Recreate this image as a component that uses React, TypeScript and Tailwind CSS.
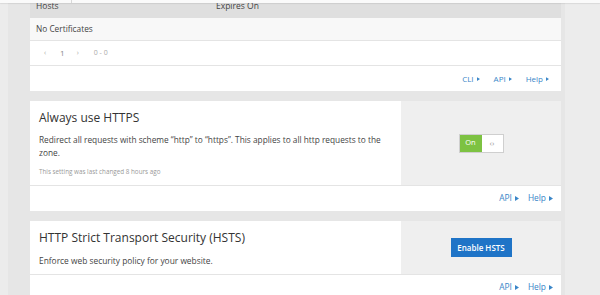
import React from "react";

const Tri = ({ size = 4 }: { size?: number }) => (
  <svg width={size} height={size + 1} viewBox="0 0 4 5" className="inline-block ml-[3px]">
    <path d="M0 0 L4 2.5 L0 5 Z" fill="currentColor" />
  </svg>
);

const Link = ({ label, size = 4 }: { label: string; size?: number }) => (
  <span className="flex items-center text-[#3a86c8]">
    {label}
    <Tri size={size} />
  </span>
);

export default function App() {
  return (
    <div
      className="relative w-[600px] h-[295px] overflow-hidden bg-[#ebebeb] flex"
      style={{ fontFamily: '"Open Sans", "Noto Sans", sans-serif' }}
    >
      <div className="absolute left-0 top-0 w-[600px] h-[3px] bg-[#fafafa] shadow-[0_1px_1px_rgba(0,0,0,0.08)] z-10 flex">
        <div className="w-[71px]" />
        <div className="w-[1px] bg-[#d8d8d8]" />
      </div>
      <div className="w-[8px] bg-[#ececec]" />
      <div className="w-[557px] bg-[#e6e6e6] pl-[22px] pr-[4px] flex flex-col">
        {/* Card 1 */}
        <div className="mt-[-6px] bg-white flex flex-col">
          <div className="h-[24px] bg-[#dfdfdf] flex items-center text-[8.5px] font-medium text-[#444]">
            <div className="w-[180px] pl-[6px]">Hosts</div>
            <div className="pl-[6px]">Expires On</div>
          </div>
          <div className="h-[23px] bg-[#f8f8f8] border-b border-[#e4e4e4] flex items-center pl-[6px] text-[8.3px] text-[#444]">
            No Certificates
          </div>
          <div className="h-[25px] border-b border-[#e4e4e4] flex items-center text-[7px] text-[#aaa]">
            <span className="ml-[14px]">‹</span>
            <span className="ml-[14px] text-[8px] text-[#888]">1</span>
            <span className="ml-[12px]">›</span>
            <span className="ml-[15px]">0 - 0</span>
          </div>
          <div className="h-[25px] flex items-center justify-end gap-[14px] pr-[12px] text-[8px]">
            <Link label="CLI" size={3} />
            <Link label="API" size={3} />
            <Link label="Help" size={3} />
          </div>
        </div>

        {/* Card 2 */}
        <div className="mt-[10px] bg-white flex flex-col">
          <div className="flex border-b border-[#e4e4e4]">
            <div className="flex-1 pl-[9px] pr-[6px] pt-[9px] pb-[9px]">
              <div className="text-[12px] leading-[16px] text-[#333]">Always use HTTPS</div>
              <div className="mt-[7px] text-[8.3px] leading-[13px] text-[#444]">
                Redirect all requests with scheme “http” to “https”. This applies to all http requests to the zone.
              </div>
              <div className="mt-[8px] text-[6.3px] leading-[9px] text-[#999]">
                This setting was last changed 8 hours ago
              </div>
            </div>
            <div className="w-[160px] bg-[#efefef] flex items-center justify-center">
              <div className="flex h-[19px] border border-[#cfcfcf] bg-white">
                <div className="w-[22px] bg-[#7dc242] text-white text-[7.5px] flex items-center justify-center">
                  On
                </div>
                <div className="w-[21px] text-[#999] text-[8px] flex items-center justify-center">‹›</div>
              </div>
            </div>
          </div>
          <div className="h-[25px] flex items-center justify-end gap-[9px] pr-[8px] text-[8.4px]">
            <Link label="API" />
            <Link label="Help" />
          </div>
        </div>

        {/* Card 3 */}
        <div className="mt-[10px] bg-white flex flex-col">
          <div className="flex border-b border-[#e4e4e4]">
            <div className="flex-1 pl-[9px] pr-[6px] pt-[9px] pb-[7px]">
              <div className="text-[12px] leading-[16px] text-[#333]">
                HTTP Strict Transport Security (HSTS)
              </div>
              <div className="mt-[8px] text-[8.4px] leading-[13px] text-[#444]">
                Enforce web security policy for your website.
              </div>
            </div>
            <div className="w-[160px] bg-[#efefef] flex items-center justify-center">
              <div className="w-[61px] h-[19px] bg-[#1f74c7] text-white text-[8px] font-semibold flex items-center justify-center">
                Enable HSTS
              </div>
            </div>
          </div>
          <div className="h-[25px] flex items-center justify-end gap-[9px] pr-[8px] text-[8.4px]">
            <Link label="API" />
            <Link label="Help" />
          </div>
        </div>
      </div>
      <div className="flex-1 bg-[#ececec]" />
    </div>
  );
}
